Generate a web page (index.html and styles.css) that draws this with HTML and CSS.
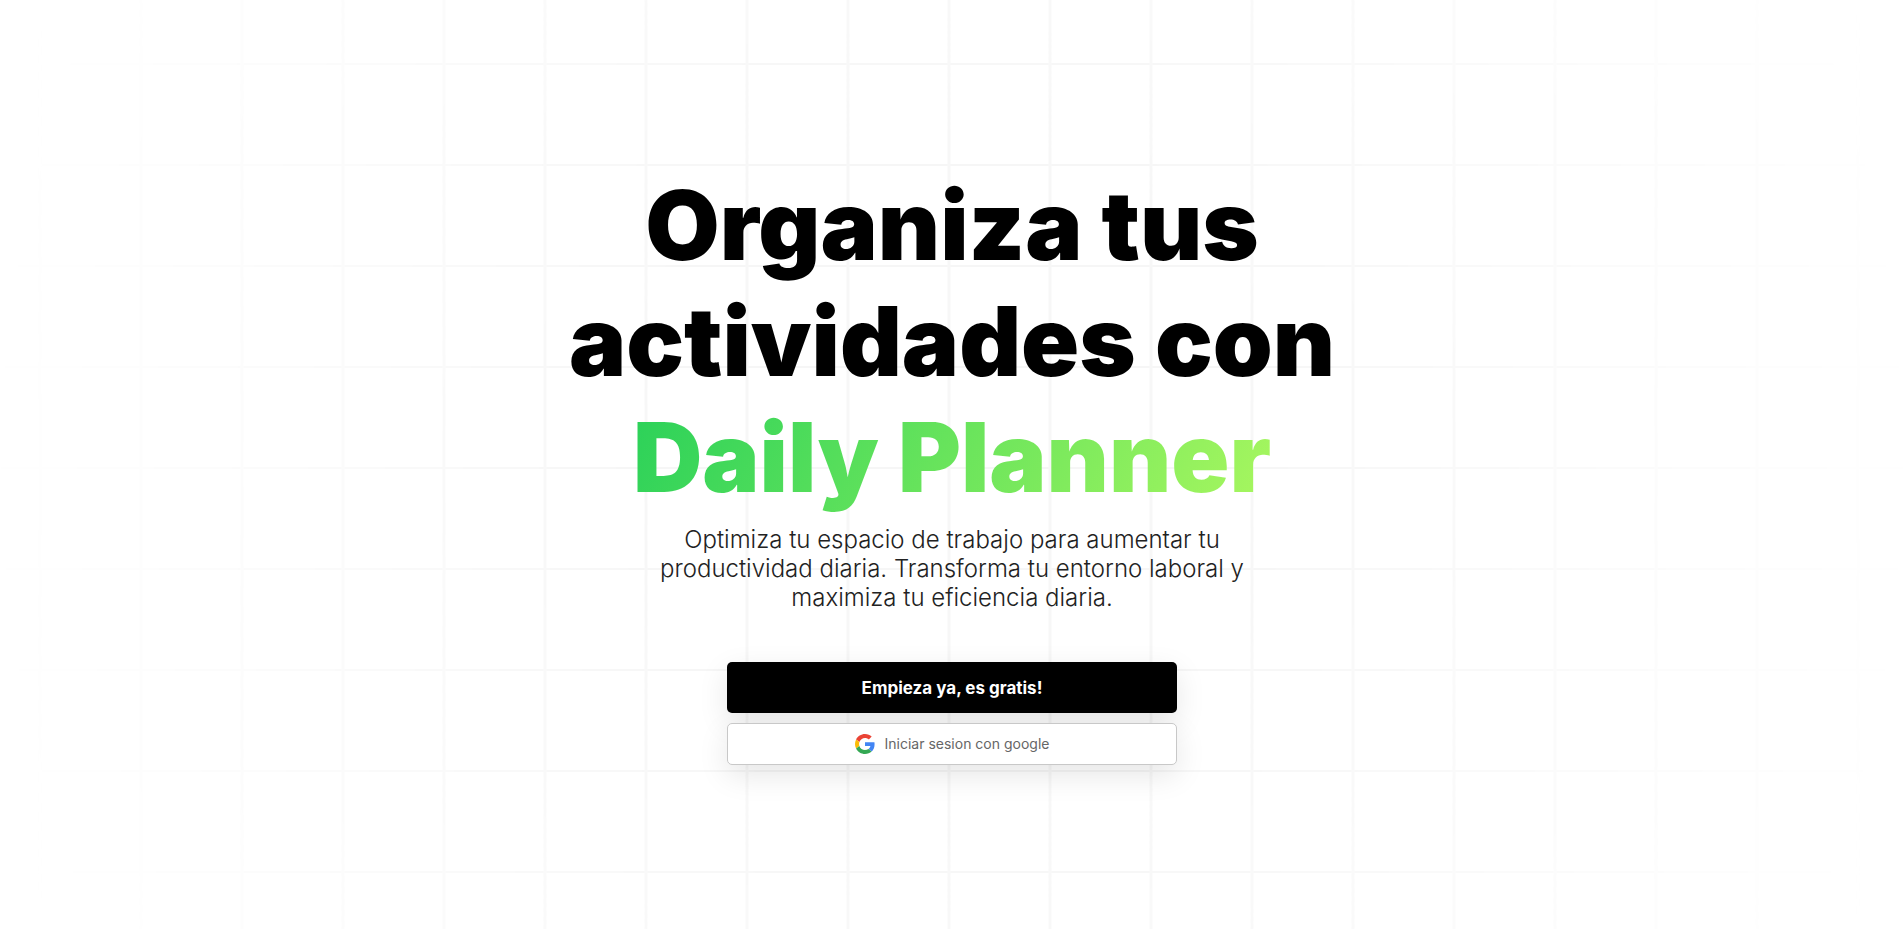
FILE: index.html
```html
<!DOCTYPE html>
<html lang="es">
<head>
<meta charset="utf-8">
<meta name="viewport" content="width=device-width, initial-scale=1">
<title>Daily Planner</title>
<link rel="stylesheet" href="styles.css">
</head>
<body>
<main class="hero">
  <h1 class="hero-title">Organiza tus actividades con <span class="hero-brand">Daily Planner</span></h1>
  <p class="hero-text">Optimiza tu espacio de trabajo para aumentar tu productividad diaria. Transforma tu entorno laboral y maximiza tu eficiencia diaria.</p>
  <div class="actions">
    <button class="btn btn-primary" type="button">Empieza ya, es gratis!</button>
    <button class="btn btn-google" type="button">
      <svg class="google-icon" viewBox="0 0 48 48" aria-hidden="true">
        <path fill="#EA4335" d="M24 9.5c3.54 0 6.71 1.22 9.21 3.6l6.85-6.85C35.9 2.38 30.47 0 24 0 14.62 0 6.51 5.38 2.56 13.22l7.98 6.19C12.43 13.72 17.74 9.5 24 9.5z"/>
        <path fill="#4285F4" d="M46.98 24.55c0-1.57-.15-3.09-.38-4.55H24v9.02h12.94c-.58 2.96-2.26 5.48-4.78 7.18l7.73 6c4.51-4.18 7.09-10.36 7.09-17.65z"/>
        <path fill="#FBBC05" d="M10.53 28.59c-.48-1.45-.76-2.99-.76-4.59s.27-3.14.76-4.59l-7.98-6.19C.92 16.46 0 20.12 0 24c0 3.88.92 7.54 2.56 10.78l7.97-6.19z"/>
        <path fill="#34A853" d="M24 48c6.48 0 11.93-2.13 15.89-5.81l-7.73-6c-2.15 1.45-4.92 2.3-8.16 2.3-6.26 0-11.57-4.22-13.47-9.91l-7.98 6.19C6.51 42.62 14.62 48 24 48z"/>
      </svg>
      <span>Iniciar sesion con google</span>
    </button>
  </div>
</main>
</body>
</html>
```
FILE: styles.css
```css
* {
  box-sizing: border-box;
}

body {
  margin: 0;
  background: #fff;
  font-family: Inter, "Liberation Sans", sans-serif;
}

.hero {
  position: relative;
  isolation: isolate;
  min-height: 100vh;
  padding-top: 3px;
  display: flex;
  flex-direction: column;
  align-items: center;
  justify-content: center;
  text-align: center;
}

/* Faint grid that fades out towards the window edges */
.hero::before {
  content: "";
  position: absolute;
  inset: 0;
  z-index: -1;
  background-image:
    linear-gradient(to right, transparent 49px, #fafafa 49px, #f6f6f6 50px, #f6f6f6 51px, #fafafa 52px, transparent 52px),
    linear-gradient(to bottom, transparent 49px, #f6f6f6 49px, #f6f6f6 51px, transparent 51px);
  background-size: 101px 101px;
  background-position: calc(50% - 3px) calc(50% + 4px);
  mask-image: radial-gradient(ellipse 52% 120% at center, #000 30%, transparent 100%);
}

.hero-title {
  max-width: 800px;
  margin: 0;
  font-size: 96px;
  font-weight: 900;
  line-height: 116px;
  color: #000;
}

.hero-brand {
  display: inline-block;
  background: linear-gradient(120deg, #2ad159, #a9f75f);
  -webkit-background-clip: text;
  background-clip: text;
  color: transparent;
}

.hero-text {
  max-width: 600px;
  margin: 10px 0 50px;
  font-size: 24px;
  font-weight: 300;
  line-height: 29px;
  color: #222;
}

.actions {
  width: 100%;
  max-width: 450px;
  display: flex;
  flex-direction: column;
  gap: 10px;
}

.btn {
  display: flex;
  align-items: center;
  justify-content: center;
  gap: 10px;
  border-radius: 5px;
  font-family: inherit;
  box-shadow: 0 10px 30px rgba(0, 0, 0, 0.1);
  cursor: pointer;
}

.btn-primary {
  padding: 16px 15px 14px;
  border: 0;
  background: #000;
  color: #fff;
  font-size: 17px;
  font-weight: 700;
  line-height: 21px;
}

.btn-google {
  padding: 10px;
  border: 1px solid #c8c8c8;
  background: #fff;
  color: #666;
  font-size: 14px;
  line-height: 18px;
}

.google-icon {
  width: 20px;
  height: 20px;
}
```
